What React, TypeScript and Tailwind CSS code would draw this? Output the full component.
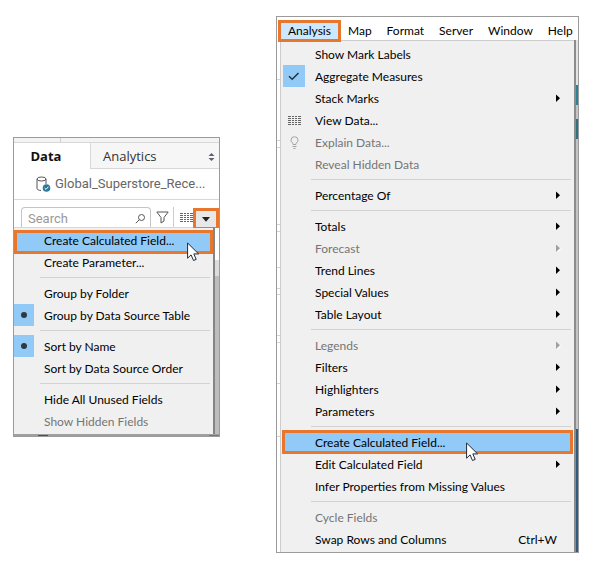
import React from 'react';

type Item = {
  label: string;
  disabled?: boolean;
  submenu?: boolean;
  mark?: 'check' | 'dot';
  icon?: 'grid' | 'bulb';
  shortcut?: string;
  highlight?: boolean;
};

const fieldMenu: Item[][] = [
  [{ label: 'Create Calculated Field...', highlight: true }, { label: 'Create Parameter...' }],
  [{ label: 'Group by Folder' }, { label: 'Group by Data Source Table', mark: 'dot' }],
  [{ label: 'Sort by Name', mark: 'dot' }, { label: 'Sort by Data Source Order' }],
  [{ label: 'Hide All Unused Fields' }, { label: 'Show Hidden Fields', disabled: true }],
];

const analysisMenu: Item[][] = [
  [
    { label: 'Show Mark Labels' },
    { label: 'Aggregate Measures', mark: 'check' },
    { label: 'Stack Marks', submenu: true },
    { label: 'View Data...', icon: 'grid' },
    { label: 'Explain Data...', icon: 'bulb', disabled: true },
    { label: 'Reveal Hidden Data', disabled: true },
  ],
  [{ label: 'Percentage Of', submenu: true }],
  [
    { label: 'Totals', submenu: true },
    { label: 'Forecast', submenu: true, disabled: true },
    { label: 'Trend Lines', submenu: true },
    { label: 'Special Values', submenu: true },
    { label: 'Table Layout', submenu: true },
  ],
  [
    { label: 'Legends', submenu: true, disabled: true },
    { label: 'Filters', submenu: true },
    { label: 'Highlighters', submenu: true },
    { label: 'Parameters', submenu: true },
  ],
  [
    { label: 'Create Calculated Field...', highlight: true },
    { label: 'Edit Calculated Field', submenu: true },
    { label: 'Infer Properties from Missing Values' },
  ],
  [{ label: 'Cycle Fields', disabled: true }, { label: 'Swap Rows and Columns', shortcut: 'Ctrl+W' }],
];

function GridIcon() {
  return (
    <svg width="13" height="9" viewBox="0 0 13 9" shapeRendering="crispEdges" fill="#666">
      {[0, 2, 4, 6, 8].map((y) => (
        <g key={y}>
          <rect x="0" y={y} width="3" height="1" />
          <rect x="4" y={y} width="2" height="1" />
          <rect x="7" y={y} width="2" height="1" />
          <rect x="10" y={y} width="3" height="1" />
        </g>
      ))}
    </svg>
  );
}

function BulbIcon() {
  return (
    <svg width="9" height="13" viewBox="0 0 9 13" fill="none" stroke="#a3a3a3">
      <path d="M3 8.5V7.3C1.8 6.6 1 5.6 1 4.2a3.5 3.5 0 0 1 7 0c0 1.4-.8 2.4-2 3.1v1.2z" />
      <path d="M2.5 10.5h4M3.5 12.5h2" />
    </svg>
  );
}

function CursorIcon() {
  return (
    <svg width="13" height="20" viewBox="0 0 13 20" fill="#fff" stroke="#1f2937" strokeLinejoin="round">
      <path d="M.6 1v15.2l3.5-3.3 2.4 5.6 2.7-1.1-2.4-5.5h4.8z" />
    </svg>
  );
}

function Arrow({ disabled }: { disabled?: boolean }) {
  return (
    <svg width="6" height="9" viewBox="0 0 6 9">
      {disabled && <path d="M2 2v7l4-4z" fill="#fff" />}
      <path d="M1 .5v7.5l4-3.7z" fill={disabled ? '#a0a0a0' : '#000'} />
    </svg>
  );
}

function Mark({ item }: { item: Item }) {
  if (item.mark === 'check') {
    return (
      <svg width="12" height="9" viewBox="0 0 12 9" fill="none" stroke="#27303a" strokeWidth="1.5">
        <path d="M1 4.2l3.2 3L10.5 1" />
      </svg>
    );
  }
  if (item.mark === 'dot') return <span className="size-1.5 rounded-full bg-[#303840]" />;
  if (item.icon === 'grid') return <GridIcon />;
  if (item.icon === 'bulb') return <BulbIcon />;
  return null;
}

function MenuItem({ item, tile }: { item: Item; tile: string }) {
  const tone = item.disabled ? 'text-[#757575]' : 'text-black';
  const fill = item.mark ? 'bg-[#91c9f7]' : '';
  return (
    <li className="relative">
      <button type="button" role="menuitem" disabled={item.disabled} className={`flex h-[22px] w-full items-center text-left ${tone}`}>
        <span className={`flex h-full shrink-0 items-center justify-center ${tile} ${fill}`}>
          <Mark item={item} />
        </span>
        <span className="flex-1 whitespace-nowrap pl-2.5 pt-0.5">{item.label}</span>
        {item.shortcut && <span className="pr-4 pt-0.5">{item.shortcut}</span>}
        {item.submenu && (
          <span className="pr-3">
            <Arrow disabled={item.disabled} />
          </span>
        )}
      </button>
    </li>
  );
}

type MenuStyle = { tile: string; frame: string; pad: string; cursor: string; rule: string };

function HighlightedItem({ item, frame, pad, cursor }: { item: Item } & Pick<MenuStyle, 'frame' | 'pad' | 'cursor'>) {
  return (
    <li className={`relative z-10 ${frame}`}>
      <button
        type="button"
        role="menuitem"
        className={`flex h-6 w-full items-center border-[3px] border-[#e8762c] bg-[#91c9f7] text-left ${pad}`}
      >
        {item.label}
      </button>
      <span className={`pointer-events-none absolute top-3 ${cursor}`}>
        <CursorIcon />
      </span>
    </li>
  );
}

function Menu({ groups, tile, frame, pad, cursor, rule }: { groups: Item[][] } & MenuStyle) {
  return (
    <ul role="menu">
      {groups.map((group, g) => (
        <React.Fragment key={g}>
          {g > 0 && (
            <li role="separator" className={`flex h-[9px] items-center ${rule}`}>
              <span className="h-px flex-1 bg-[#d2d2d2]" />
            </li>
          )}
          {group.map((item) =>
            item.highlight ? (
              <HighlightedItem key={item.label} item={item} frame={frame} pad={pad} cursor={cursor} />
            ) : (
              <MenuItem key={item.label} item={item} tile={tile} />
            ),
          )}
        </React.Fragment>
      ))}
    </ul>
  );
}

function DataPane() {
  return (
    <section className="w-[207px] shrink-0 border border-[#9b9b9b] bg-white">
      <div className="flex h-[5px] border-b border-[#d8d8d8] bg-[#f3f3f3]">
        <span className="ml-[46px] w-px bg-[#d0d0d0]" />
      </div>
      <div role="tablist" className="flex h-[26px] font-['Open_Sans',sans-serif] text-[13px]">
        <button type="button" role="tab" aria-selected="true" className="w-[76px] pr-3 pt-0.5 font-bold text-[#111]">
          Data
        </button>
        <button
          type="button"
          role="tab"
          aria-selected="false"
          className="flex flex-1 items-center justify-between border-b border-l border-[#d8d8d8] bg-[#f6f6f6] pl-3 pr-1 pt-0.5 text-[#333]"
        >
          Analytics
          <svg width="7" height="8" viewBox="0 0 7 8" fill="#606070">
            <path d="M.5 3L3.5 0l3 3zM.5 5l3 3 3-3z" />
          </svg>
        </button>
      </div>
      <div className="flex h-[31px] items-center gap-1 border-b border-[#d8d8d8] pl-[22px]">
        <svg width="15" height="17" viewBox="0 0 15 17" fill="none" stroke="#555">
          <ellipse cx="5.5" cy="3" rx="4.5" ry="2" />
          <path d="M1 3v9.5c0 1 1.500 1.800 4 2M10 3v5" />
          <circle cx="10.500" cy="12" r="3.800" fill="#2b7a9e" stroke="none" />
          <path d="M8.600 12l1.400 1.400 2.400-2.700" stroke="#fff" />
        </svg>
        <span className="whitespace-nowrap font-['Roboto',sans-serif] text-[13px] text-[#666]">Global_Superstore_Rece...</span>
      </div>
      <div className="flex h-7 items-end border-b border-[#d8d8d8]">
        <label className="ml-[7px] flex h-5 w-[130px] items-center rounded-t-sm border border-b-0 border-[#c4c4c4] pl-1.5 pr-1 pt-0.5">
          <input
            type="text"
            aria-label="Search"
            placeholder="Search"
            className="w-full min-w-0 bg-transparent font-['Roboto',sans-serif] text-[13px] outline-none placeholder:text-[#999]"
          />
          <svg width="11" height="11" viewBox="0 0 11 11" fill="none" stroke="#555" className="shrink-0">
            <circle cx="6.500" cy="4.500" r="3" />
            <path d="M4.200 6.800L.8 10.200" />
          </svg>
        </label>
        <button type="button" aria-label="Filter fields" className="flex h-5 w-[23px] items-center justify-center border-r border-[#ccc]">
          <svg width="13" height="13" viewBox="0 0 13 13" fill="none" stroke="#555">
            <path d="M.8 1h11.400L8 6.500V10l-3 2V6.500z" />
          </svg>
        </button>
        <button type="button" aria-label="View data" className="flex h-5 flex-1 items-center justify-end">
          <GridIcon />
        </button>
        <button
          type="button"
          aria-label="Data pane menu"
          className="-mb-[3px] flex h-[22px] w-[26px] items-center justify-center border-[3px] border-[#e8762c] bg-[#e8e8e8]"
        >
          <svg width="8" height="5" viewBox="0 0 8 5" fill="#222">
            <path d="M0 0h8L4 4.800z" />
          </svg>
        </button>
      </div>
      <div className="flex">
        <div className="flex-1 bg-[#f0f0f0] pb-0.5 pt-px">
          <Menu
            groups={fieldMenu}
            tile="w-5"
            frame="mt-px -mb-[3px]"
            pad="pb-0.5 pl-[27px]"
            cursor="left-[173px]"
            rule="ml-[26px] mr-[3px]"
          />
        </div>
        <div className="flex w-[6px] flex-col border-l-2 border-[#858585]">
          <span className="h-8 bg-white" />
          <span className="h-4 bg-[#dcdcdc]" />
          <span className="flex-1 bg-[#bdbdbd]" />
        </div>
      </div>
      <div className="flex h-[2px] items-end justify-between bg-[#a0a0a0]">
        <span className="ml-6 h-px w-2.5 bg-[#2d5c70]" />
        <span className="h-px w-2.5 bg-[#777]" />
      </div>
    </section>
  );
}

const gutterRows = [40, 61, 7, 77, 7, 36, 21, 6, 41, 7, 41, 53];

function AnalysisPane() {
  return (
    <section className="min-w-0 flex-1 border border-[#9b9b9b] bg-white">
      <nav className="flex h-[23px] items-center gap-[15px] pl-px">
        <button
          type="button"
          className="relative z-20 -mr-2 mt-1 h-[22px] border-[3px] border-[#e8762c] bg-[#cce8ff] px-[7px] leading-4"
        >
          Analysis
        </button>
        {['Map', 'Format', 'Server', 'Window', 'Help'].map((name) => (
          <button key={name} type="button" className="pt-1">
            {name}
          </button>
        ))}
      </nav>
      <div className="flex">
        <div className="w-[3px] shrink-0">
          {gutterRows.map((h, i) => (
            <div key={i} className="border-b border-[#d4d4d4]" style={{ height: h }} />
          ))}
        </div>
        <div className="flex-1 border-l border-t border-[#cccccc] bg-[#f0f0f0] px-px py-0.5">
          <Menu
            groups={analysisMenu}
            tile="ml-px w-[22px]"
            frame="-my-px"
            pad="pl-[30px] pt-0.5"
            cursor="left-[184px]"
            rule="ml-[29px] mr-0.5"
          />
        </div>
        <div className="flex w-1 shrink-0 flex-col border-l-2 border-[#8c8c8c]">
          <span className="h-[45px] bg-[#e4e4e4]" />
          <span className="h-5 bg-[#2b8296]" />
          <span className="h-3.5 bg-[#c4c4c4]" />
          <span className="h-5 bg-[#2f7181]" />
          <span className="h-[290px] bg-[#c4c4c4]" />
          <span className="flex-1 bg-[#315a80]" />
        </div>
      </div>
    </section>
  );
}

export default function App() {
  return (
    <main className="flex items-start gap-14 bg-white pb-3.5 pl-[13px] pr-6 pt-4 font-['Lato',sans-serif] text-xs text-black">
      <div className="mt-[121px] shrink-0">
        <DataPane />
      </div>
      <AnalysisPane />
    </main>
  );
}
